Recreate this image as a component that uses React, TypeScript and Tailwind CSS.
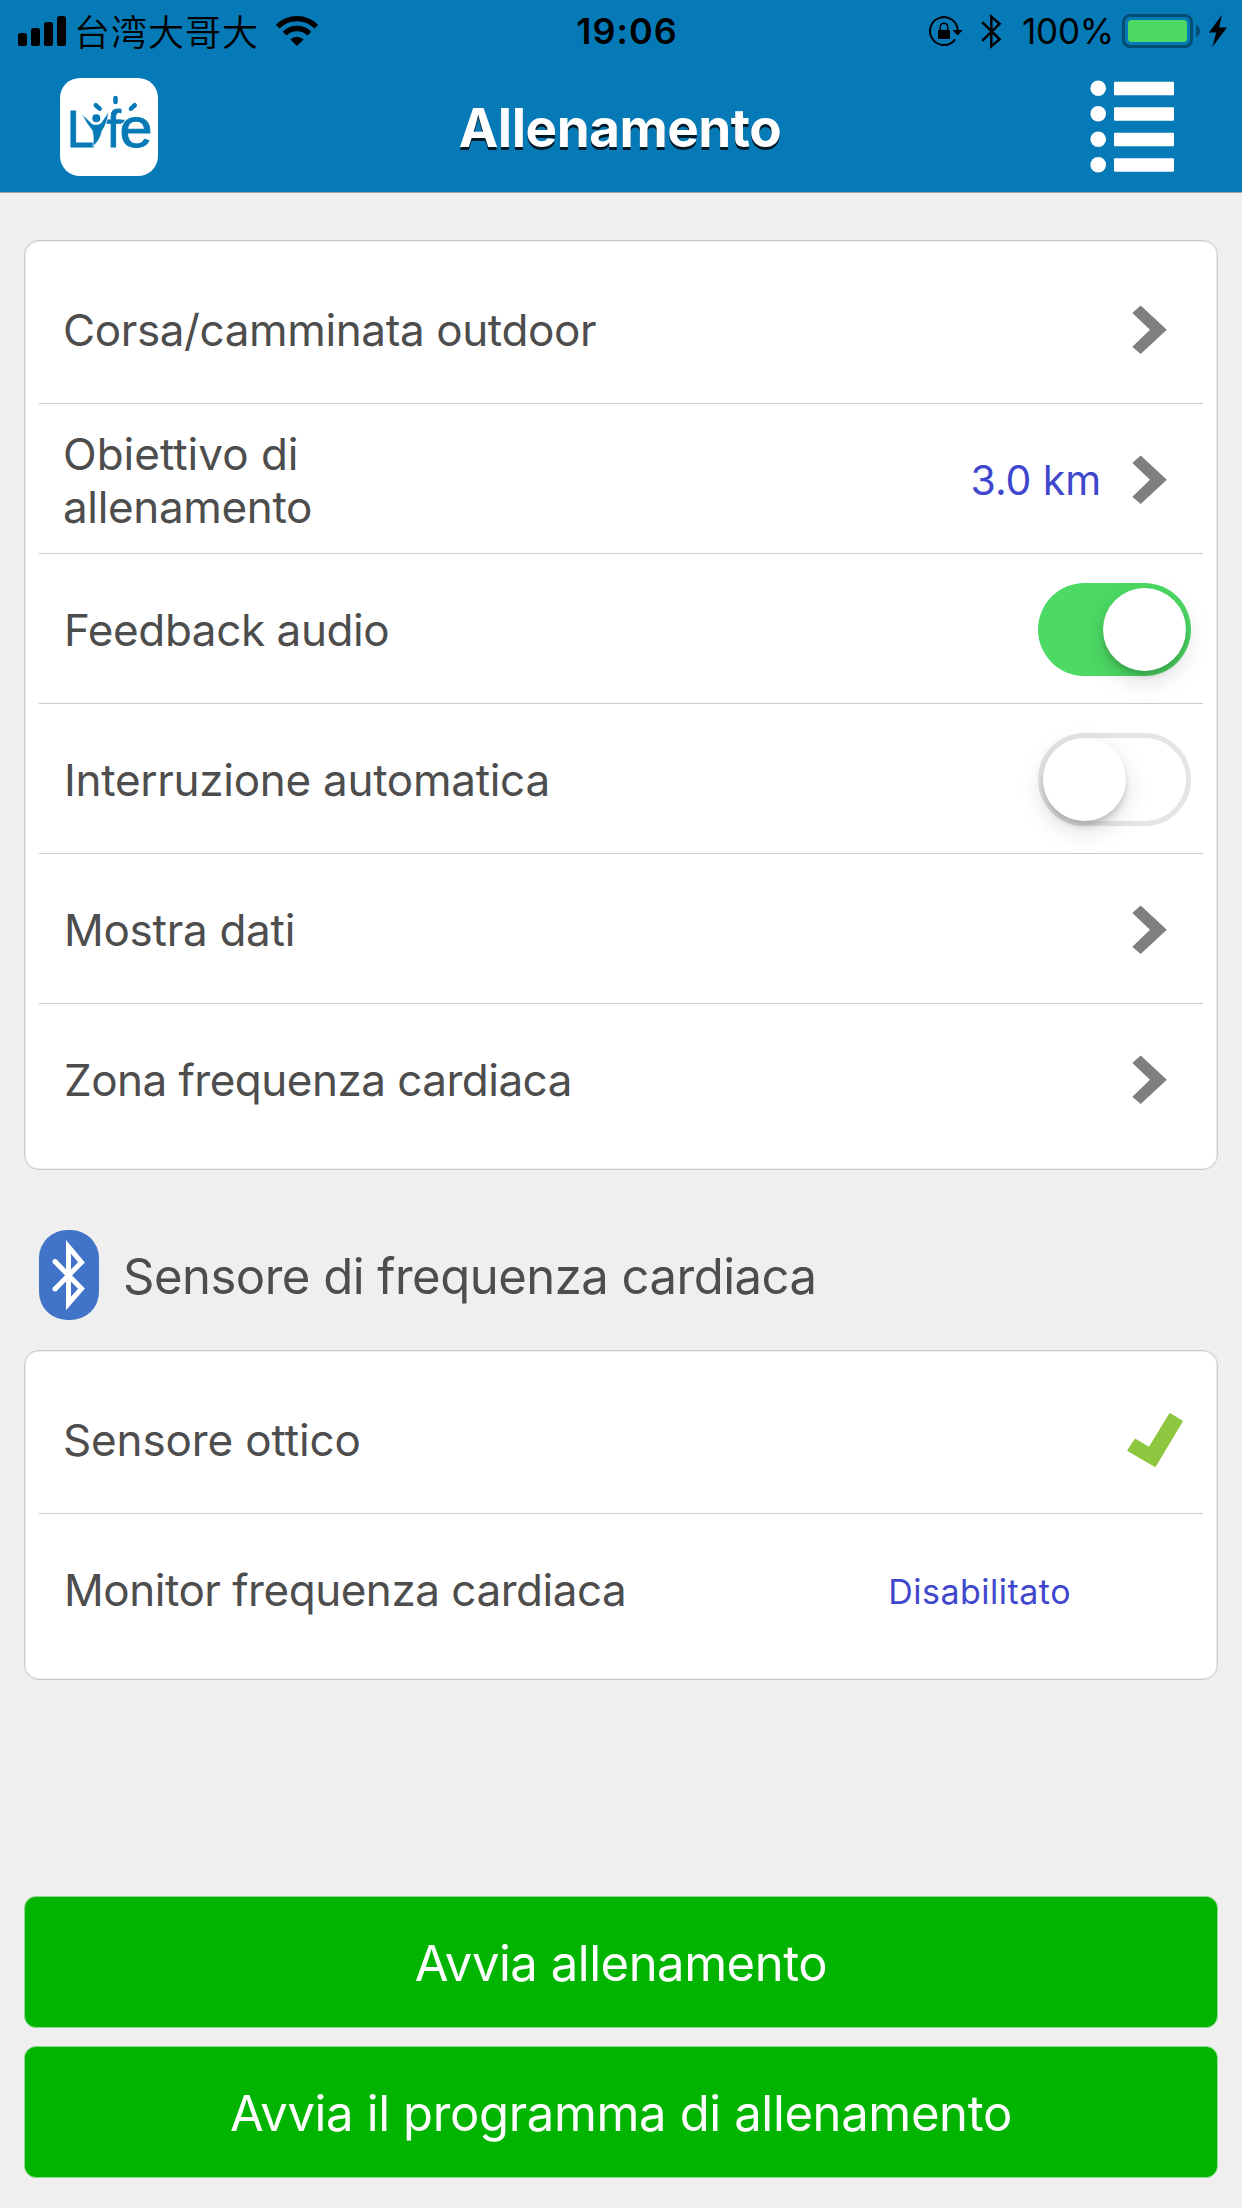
import type { ReactNode } from "react";

function SignalIcon() {
  return (
    <svg width="48" height="30" viewBox="0 0 48 30" fill="#000">
      <rect x="0" y="17" width="9" height="13" rx="2.6" />
      <rect x="13" y="12" width="9" height="18" rx="2.6" />
      <rect x="26" y="6" width="9" height="24" rx="2.6" />
      <rect x="39" y="0" width="9" height="30" rx="2.6" />
    </svg>
  );
}

function WifiIcon() {
  return (
    <svg width="42" height="30" viewBox="0 0 42 30" fill="none" stroke="#000" strokeWidth="5.3">
      <path d="M1.7 10.7A27.3 27.3 0 0 1 40.3 10.7" />
      <path d="M8.6 17.6A17.6 17.6 0 0 1 33.4 17.6" />
      <path d="M21 30L14.4 23.4A9.3 9.3 0 0 1 27.6 23.4Z" fill="#000" stroke="none" />
    </svg>
  );
}

function RotationLockIcon() {
  return (
    <svg width="34" height="30" viewBox="0 0 34 30">
      <path d="M28.800 15A13.900 13.900 0 1 0 26.100 23.300" fill="none" stroke="#000" strokeWidth="2" />
      <path d="M23.6 14H33.6L28.6 19.6Z" />
      <rect x="9" y="14" width="12" height="9" rx="1.3" />
      <path d="M11.2 14.5V11.2a3.8 4 0 0 1 7.6 0V14.5" fill="none" stroke="#000" strokeWidth="1.5" />
    </svg>
  );
}

function BluetoothIcon() {
  return (
    <svg width="21" height="37" viewBox="0 0 21 37" fill="none" stroke="#000" strokeWidth="2.5">
      <path d="M1.2 9.2L18.6 26.3L10.3 33.4V3.8L18.6 10.8L1.2 27.8" />
    </svg>
  );
}

function BatteryIcon() {
  return (
    <svg width="78" height="34" viewBox="0 0 78 34">
      <rect x="1.5" y="1.5" width="68" height="31" rx="6.5" fill="none" stroke="#044d73" strokeWidth="3" />
      <rect x="6" y="6" width="59" height="22" rx="3.5" fill="#4cd964" />
      <path d="M74 11C76.5 12 78 14.400 78 17C78 19.600 76.500 22 74 23Z" fill="#044d73" />
    </svg>
  );
}

function BoltIcon() {
  return (
    <svg width="18" height="32" viewBox="0 0 18 32">
      <path d="M12.800 0L0 17.500H7.200L3.300 32L18 12.500H10.200Z" />
    </svg>
  );
}

function LyfeLogo() {
  return (
    <svg width="98" height="98" viewBox="0 0 98 98">
      <rect width="98" height="98" rx="20" fill="#fff" />
      <g fill="#067ab7" stroke="#067ab7" strokeWidth="0.9" fontFamily="Liberation Sans, Arial, sans-serif">
        <text x="6.800" y="68.500" fontSize="51">L</text>
        <text x="46.500" y="68.500" fontSize="52">f</text>
      </g>
      <path d="M44 43.400H68" stroke="#067ab7" strokeWidth="3.200" />
      <g fontFamily="Liberation Sans, Arial, sans-serif" fontSize="55" transform="translate(59.600 68.600) scale(1.080 1)">
        <text fill="#fff" stroke="#fff" strokeWidth="2.600" aria-hidden="true">e</text>
        <text fill="#067ab7" stroke="#067ab7" strokeWidth="0.900">e</text>
      </g>
      <path
        d="M21.500 35.500L32.500 46Q37 47.500 41 45L48.800 33.500Q47 46.500 42 53Q40.500 62 33 68.500Q34 60 32.500 53Q26 45 21.500 35.500Z"
        fill="#067ab7"
        stroke="#fff"
        strokeWidth="0.700"
      />
      <circle cx="36.300" cy="40.200" r="4" fill="#067ab7" />
      <g stroke="#067ab7" strokeWidth="4.600" strokeLinecap="round">
        <path d="M55.500 20V24" />
        <path d="M35.800 27.200L39.600 30.600" />
        <path d="M74.700 27.200L71 30.600" />
      </g>
    </svg>
  );
}

function MenuIcon() {
  return (
    <svg width="84" height="93" viewBox="0 0 84 93" fill="#fff">
      {[8.3, 33.700, 59.300, 84.700].map((cy) => (
        <g key={cy}>
          <circle cx="8.200" cy={cy} r="7.800" />
          <rect x="24" y={cy - 6.500} width="60" height="13.500" rx="1" />
        </g>
      ))}
    </svg>
  );
}

function Chevron() {
  return (
    <svg width="36" height="50" viewBox="0 0 36 50" fill="#7f7f7f">
      <path d="M8.700 0.600L34.800 24.800L8.700 49L0.300 41.700L18 24.800L0.300 8Z" />
    </svg>
  );
}

function CheckIcon() {
  return (
    <svg width="56" height="54" viewBox="0 0 56 54" fill="#8dc63f" stroke="#8dc63f" strokeWidth="2" strokeLinejoin="round">
      <path d="M8.300 26.800L1.400 37.300L28 53L54.800 8.300L42.900 1.200L22.400 35Z" />
    </svg>
  );
}

function BluetoothBadge() {
  return (
    <svg width="60" height="90" viewBox="0 0 60 90" fill="none">
      <rect width="60" height="90" rx="28" fill="#4173c9" />
      <path d="M16 31.500L42.500 58.700L29.500 73.500V16.800L42.500 32.300L16 59" stroke="#fff" strokeWidth="5" strokeMiterlimit="5" />
      <circle cx="16" cy="31.500" r="2.500" fill="#fff" />
      <circle cx="16" cy="59" r="2.500" fill="#fff" />
    </svg>
  );
}

function Switch({ on }: { on: boolean }) {
  return (
    <div
      role="switch"
      aria-checked={on}
      className={
        on
          ? "flex h-[93px] w-[153px] items-center justify-end rounded-full bg-[#4cd964] p-[5px]"
          : "flex h-[93px] w-[153px] items-center justify-start rounded-full border-[5px] border-[#e5e5e5] bg-white"
      }
    >
      <div className="size-[83px] shrink-0 rounded-full bg-white shadow-[0_9px_24px_rgba(0,0,0,0.15),0_5px_5px_rgba(0,0,0,0.14)]" />
    </div>
  );
}

function Card({ children }: { children: ReactNode }) {
  return (
    <section className="rounded-[15px] border border-[#cbcbcb] bg-white px-[14px] pt-[13px] pb-[15px] shadow-[inset_0_0_0_1px_#ececec]">
      {children}
    </section>
  );
}

function Row({ label, labelClass, end, last = false }: { label: ReactNode; labelClass: string; end: ReactNode; last?: boolean }) {
  return (
    <div
      className={
        last
          ? "flex h-[150px] items-center justify-between pt-0.5 pl-[24px]"
          : "flex h-[150px] items-center justify-between border-b border-[#cbcbcb] pt-[3px] pl-[24px]"
      }
    >
      <span className={`text-[44px] leading-[53px] whitespace-nowrap text-[#4d4d4d] ${labelClass}`}>{label}</span>
      {end}
    </div>
  );
}

const chevron = (
  <span className="pr-[35px]">
    <Chevron />
  </span>
);

export default function App() {
  return (
    <div className="flex h-[2208px] w-[1242px] flex-col overflow-hidden bg-[#efefef] font-[Inter,'Noto_Sans_CJK_SC',sans-serif]">
      <header className="h-[193px] border-b border-[#a3a3a3] bg-[#067ab7] text-black">
        <div className="grid h-[62px] grid-cols-[1fr_auto_1fr] items-center pr-[15px] pl-[18px]">
          <div className="flex items-center">
            <SignalIcon />
            <span className="ml-[8px] pb-[3px] font-['Noto_Sans_CJK_SC',sans-serif] text-[36px] leading-[52px] font-[350] tracking-[1px]">
              台湾大哥大
            </span>
            <span className="ml-[17px]">
              <WifiIcon />
            </span>
          </div>
          <span className="ml-[9px] text-[36px] font-semibold tracking-[1px]">19:06</span>
          <div className="flex items-center justify-end">
            <RotationLockIcon />
            <span className="ml-[18px]">
              <BluetoothIcon />
            </span>
            <span className="ml-[20px] text-[35px] tracking-[-0.2px]">100%</span>
            <span className="ml-[8px]">
              <BatteryIcon />
            </span>
            <span className="ml-[9px]">
              <BoltIcon />
            </span>
          </div>
        </div>
        <div className="grid h-[129px] grid-cols-[1fr_auto_1fr] items-center px-[60px]">
          <LyfeLogo />
          <h1 className="mr-0.5 pt-1 text-[53px] font-bold tracking-[-0.5px] text-white [text-shadow:0_3px_0_#001a28]">Allenamento</h1>
          <span className="mr-[8px] justify-self-end">
            <MenuIcon />
          </span>
        </div>
      </header>

      <main className="flex flex-1 flex-col px-[24px] pt-[47px] pb-[30px]">
        <Card>
          <Row label="Corsa/camminata outdoor" labelClass="tracking-[-0.38px]" end={chevron} />
          <Row
            label={
              <>
                Obiettivo di
                <br />
                <span className="tracking-[-0.35px]">allenamento</span>
              </>
            }
            labelClass="pt-0.5"
            end={
              <div className="flex items-center gap-[31px]">
                <span className="text-[41px] leading-[50px] tracking-[-0.1px] text-[#3f48cc]">3.0 km</span>
                {chevron}
              </div>
            }
          />
          <Row
            label="Feedback audio"
            labelClass="ml-px tracking-[-0.4px]"
            end={
              <span className="pr-[12px] pb-0.5">
                <Switch on />
              </span>
            }
          />
          <Row
            label="Interruzione automatica"
            labelClass="ml-px tracking-[-0.28px]"
            end={
              <span className="pr-[12px] pb-0.5">
                <Switch on={false} />
              </span>
            }
          />
          <Row label="Mostra dati" labelClass="ml-px tracking-[-0.28px]" end={chevron} />
          <Row label="Zona frequenza cardiaca" labelClass="ml-px tracking-[-0.51px]" end={chevron} last />
        </Card>

        <div className="flex h-[180px] items-center gap-[24px] pt-[30px] pl-[15px]">
          <BluetoothBadge />
          <h2 className="pt-1 text-[49px] leading-[60px] tracking-[-0.5px] text-[#4d4d4d]">Sensore di frequenza cardiaca</h2>
        </div>

        <Card>
          <Row
            label="Sensore ottico"
            labelClass="tracking-[-0.13px]"
            end={
              <span className="pr-[20px]">
                <CheckIcon />
              </span>
            }
          />
          <Row
            label="Monitor frequenza cardiaca"
            labelClass="ml-px tracking-[-0.47px]"
            end={<span className="pt-[3px] pr-[132px] text-[34px] leading-[42px] tracking-[0.48px] text-[#3f48cc]">Disabilitato</span>}
            last
          />
        </Card>

        <div className="mt-auto flex flex-col gap-[18px]">
          <button className="h-[132px] rounded-[12px] border border-[#8fdb8f] bg-[#00b400] pt-1 text-[49px] tracking-[-0.47px] text-white">
            Avvia allenamento
          </button>
          <button className="h-[132px] rounded-[12px] border border-[#8fdb8f] bg-[#00b400] pt-1 text-[49px] tracking-[-0.36px] text-white">
            Avvia il programma di allenamento
          </button>
        </div>
      </main>
    </div>
  );
}
